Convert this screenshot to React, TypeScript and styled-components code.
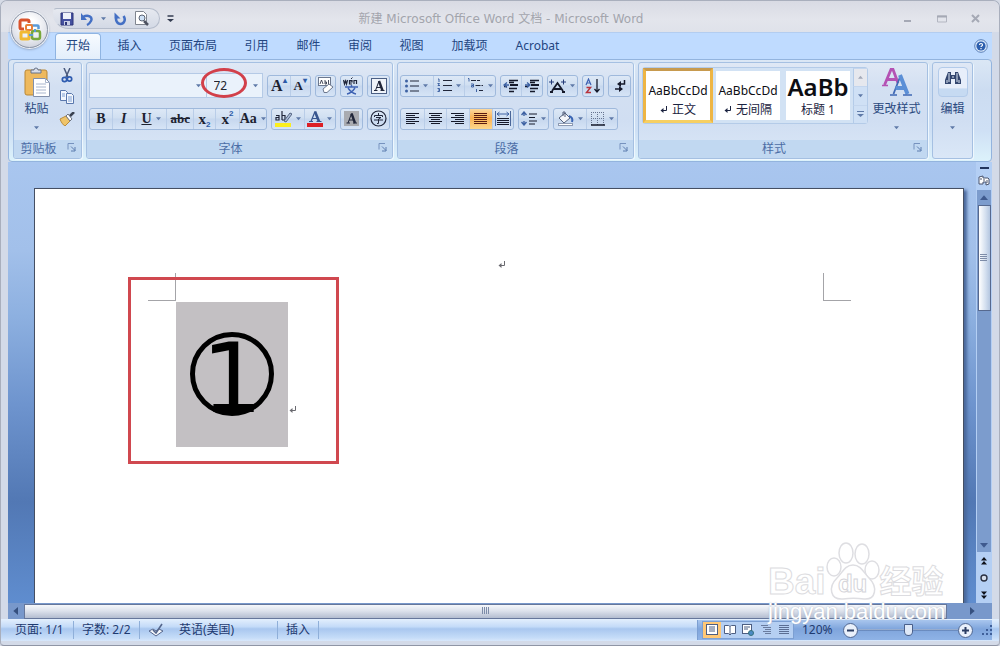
import React from "react";
import styled, { createGlobalStyle, css } from "styled-components";

const ui = '"Noto Sans", "Noto Sans CJK SC", sans-serif';
const navy = "#2b4a80";

const GlobalStyle = createGlobalStyle`
  * { box-sizing: border-box; }
  body { margin: 0; font: 12px/16px ${ui}; color: ${navy}; background: #d6dbe6; }
  button, input { font: inherit; color: inherit; margin: 0; }
  svg { display: block; flex: none; }
`;

/* ---------- window frame ---------- */

const Window = styled.div`
  position: relative;
  display: flex;
  flex-direction: column;
  height: 100vh;
  min-height: 480px;
  overflow: hidden;
  border: 1px solid #a9afbd;
  border-bottom-color: #8f95a5;
  border-radius: 7px 7px 4px 4px;
  background: #d3dae8;
`;

const TitleBar = styled.header`
  display: flex;
  align-items: center;
  height: 31px;
  flex: none;
  padding: 4px 13px 0 52px;
  background: linear-gradient(#d9dbe4, #e3e5ec 60%, #dfe2ea);
`;

const QuickAccess = styled.div`
  display: flex;
  align-items: center;
  width: 107px;
  height: 21px;
  padding-left: 5px;
  border: 1px solid #b4bccb;
  border-left-color: transparent;
  border-radius: 4px 11px 11px 16px;
  background: linear-gradient(#e6e9f0, #d3d9e5);
`;

const IconButton = styled.button<{ $w?: number }>`
  display: flex;
  align-items: center;
  justify-content: center;
  flex: none;
  width: ${p => p.$w ?? 20}px;
  height: 20px;
  padding: 0;
  border: 0;
  background: none;
`;

const Title = styled.h1`
  flex: 1;
  margin: 0;
  text-align: center;
  font: 400 12px/20px "DejaVu Sans", "Noto Sans CJK SC", sans-serif;
  color: #a3a5ad;
  white-space: nowrap;
`;

const WindowControls = styled.div`
  display: flex;
  gap: 14px;
  margin-left: 76px;
`;

const OfficeButton = styled.button`
  position: absolute;
  z-index: 3;
  left: 10px;
  top: 10px;
  width: 37px;
  height: 37px;
  padding: 0;
  display: flex;
  align-items: center;
  justify-content: center;
  border: 1px solid #8d95a5;
  border-radius: 50%;
  background: radial-gradient(circle at 50% 35%, #ffffff 20%, #e3e5ec 60%, #bfc4d0);
  box-shadow: 0 0 0 1px #eef1f6, 0 1px 3px #6d7890;
`;

/* ---------- ribbon ---------- */

const Frame = styled.div`
  display: flex;
  flex-direction: column;
  flex: 1;
  min-height: 0;
  padding: 0 7px;
`;

const TabStrip = styled.nav`
  display: flex;
  align-items: flex-end;
  height: 27px;
  flex: none;
  padding: 0 4px 0 47px;
  background: #bfdbff;
  border-top: 1px solid #b3cdf0;
`;

const Tab = styled.button<{ $active?: boolean; $w: number }>`
  width: ${p => p.$w}px;
  height: 26px;
  padding: 0 0 2px;
  flex: none;
  border: 1px solid transparent;
  border-bottom: 0;
  border-radius: 4px 4px 0 0;
  background: none;
  color: #23457f;
  ${p => p.$active && css`
    border-color: #8fb4e2;
    background: linear-gradient(#f7fbff, #e3eefb);
  `}
`;

const HelpSlot = styled.div`
  margin-left: auto;
  display: flex;
  padding-bottom: 3px;
`;

const Ribbon = styled.section`
  display: flex;
  gap: 4px;
  height: 103px;
  flex: none;
  padding: 2px 4px;
  border: 1px solid #93b4de;
  border-radius: 4px;
  background: linear-gradient(#dbe7f5, #ccdcf1 30%, #cfe0f5 70%, #dcf2fb);
`;

const Group = styled.section<{ $w: number }>`
  display: flex;
  flex-direction: column;
  flex: none;
  width: ${p => p.$w}px;
  border: 1px solid #a5c0e2;
  border-radius: 3px;
  box-shadow: 1px 1px 0 #eef7fe;
  overflow: hidden;
  background: linear-gradient(#dfe8f5, #d3e0f2 25%, #d0def2 60%, #dae7f7);
`;

const GroupBody = styled.div<{ $rows?: boolean }>`
  display: flex;
  flex: 1;
  min-height: 0;
  padding: 0 2px;
  ${p => p.$rows && css`
    flex-direction: column;
    padding-top: 10px;
    gap: 8px;
  `}
`;

const GroupLabel = styled.footer`
  display: flex;
  align-items: center;
  height: 18px;
  padding: 0 2px 0 0;
  background: #c1d8f1;
  color: #4b6da6;
`;

const GroupName = styled.span`
  flex: 1;
  text-align: center;
  white-space: nowrap;
`;

const LauncherButton = styled(IconButton)`
  align-self: flex-start;
  width: 16px;
  height: 14px;
`;

const Row = styled.div`
  display: flex;
  align-items: center;
  gap: 4px;
  height: 25px;
`;

const ButtonSet = styled.div`
  display: flex;
  height: 22px;
  border: 1px solid #9fb9dc;
  border-radius: 3px;
  background: linear-gradient(#dde8f6, #d0dff1 45%, #c6d7ee 50%, #d6e4f6);
  overflow: hidden;
`;

const Tool = styled.button<{ $w: number; $on?: boolean }>`
  display: flex;
  align-items: center;
  justify-content: center;
  gap: 4px;
  width: ${p => p.$w}px;
  height: 20px;
  padding: 0;
  border: 0;
  color: #1f2533;
  background: ${p => (p.$on ? "linear-gradient(#fcd9a0, #fbb254 45%, #fdd78c)" : "none")};
  & + & { border-left: 1px solid #b9cde8; }
`;

const Glyph = styled.span<{ $size?: number; $bold?: boolean; $italic?: boolean; $line?: string }>`
  font-family: "Liberation Serif", "Noto Sans CJK SC", serif;
  font-size: ${p => p.$size ?? 14}px;
  line-height: 16px;
  font-weight: ${p => (p.$bold ? 700 : 400)};
  font-style: ${p => (p.$italic ? "italic" : "normal")};
  text-decoration: ${p => p.$line ?? "none"};
  color: #1d2230;
`;

const Script = styled.span<{ $up?: boolean }>`
  align-self: ${p => (p.$up ? "flex-start" : "flex-end")};
  margin-left: -4px;
  font: 700 8px/9px "Liberation Sans", sans-serif;
  color: #2c5aa8;
`;

const Combos = styled.div`
  display: flex;
  width: 174px;
  height: 25px;
  border: 1px solid #b5cae6;
  background: #eaf2fb;
`;

const ComboInput = styled.input<{ $w: number }>`
  width: ${p => p.$w}px;
  height: 23px;
  padding: 0 0 0 7px;
  border: 0;
  border-left: 1px solid #b5cae6;
  background: none;
  outline: 0;
  color: #22252e;
  &:first-child { border-left: 0; }
`;

const ComboArrow = styled.button`
  width: 14px;
  padding: 0;
  border: 0;
  background: none;
  display: flex;
  align-items: center;
  justify-content: center;
`;

const SizeHighlight = styled.span`
  position: absolute;
  z-index: 4;
  left: 200px;
  top: 67px;
  width: 46px;
  height: 30px;
  border: 3px solid #d2404a;
  border-radius: 50%;
  pointer-events: none;
`;

const TallButton = styled.button<{ $w: number }>`
  display: flex;
  flex-direction: column;
  align-items: center;
  width: ${p => p.$w}px;
  padding: 3px 0 0;
  border: 0;
  background: none;
  color: #2b4a80;
  white-space: nowrap;
`;

const TallIcon = styled.span`
  height: 32px;
  display: flex;
  align-items: center;
`;

const TallLabel = styled.span`
  margin: 3px 0 8px;
`;

const SideTools = styled.div`
  display: flex;
  flex-direction: column;
  gap: 2px;
  padding-top: 2px;
`;

const Gallery = styled.div`
  display: flex;
  height: 57px;
  margin: 4px 0 0 1px;
  border: 1px solid #b4cbe8;
  border-radius: 3px;
  background: #d2e2f4;
`;

const StyleCard = styled.button<{ $active?: boolean }>`
  display: flex;
  flex-direction: column;
  align-items: center;
  justify-content: flex-end;
  width: 70px;
  height: 55px;
  padding: 0 0 2px;
  border: 3px solid ${p => (p.$active ? "#eeb544" : "#d2e2f4")};
  ${p => p.$active && css`
    border-top-color: #c79a4e;
    border-bottom-color: #f6cf62;
  `}
  background: #ffffff;
  color: #1b2340;
  overflow: hidden;
  white-space: nowrap;
`;

const StyleSample = styled.span<{ $big?: boolean }>`
  font: ${p => (p.$big ? "600 24px/30px" : "400 12px/22px")} "Noto Sans", sans-serif;
  color: #0d0d12;
`;

const StyleName = styled.span`
  display: flex;
  align-items: center;
  gap: 4px;
`;

const GalleryArrows = styled.div`
  display: flex;
  flex-direction: column;
  width: 14px;
`;

const GalleryArrow = styled.button<{ $dim?: boolean }>`
  flex: 1;
  padding: 0;
  border: 0;
  border-left: 1px solid #b4cbe8;
  border-top: 1px solid #c4d6ee;
  display: flex;
  align-items: center;
  justify-content: center;
  background: ${p => (p.$dim ? "#e6e8ee" : "#cfe0f5")};
`;

const FindTile = styled.span`
  display: flex;
  align-items: flex-start;
  justify-content: center;
  width: 30px;
  height: 30px;
  padding-top: 3px;
  border: 1px solid #b3cbea;
  border-radius: 4px;
  background: linear-gradient(#e7eefa 72%, #c6daf2 74%);
`;

/* ---------- document area ---------- */

const Workspace = styled.main`
  display: flex;
  flex: 1;
  min-height: 0;
  background: linear-gradient(#a9c6ef, #a2c0ea 20%, #8db0e0 35%, #6e94ce 55%, #5278b4 77%, #5f8dcf 100%);
`;

const Canvas = styled.div`
  flex: 1;
  min-width: 0;
  padding: 26px 12px 0 26px;
  display: flex;
`;

const Paper = styled.article`
  display: flex;
  flex-direction: column;
  flex: 1;
  min-width: 0;
  padding: 66px 140px 0 141px;
  border: 1px solid #454f63;
  border-bottom: 0;
  background: #ffffff;
  box-shadow: 3px 2px 3px #4b699c;
`;

const PageHeader = styled.div`
  height: 47px;
  display: flex;
  justify-content: center;
  padding: 6px 0 0 5px;
`;

const PageBody = styled.div`
  position: relative;
  display: flex;
  align-items: flex-start;
`;

const CropMark = styled.span<{ $right?: boolean }>`
  position: absolute;
  top: -29px;
  width: 28px;
  height: 28px;
  border: 0 solid #a4a4a8;
  border-bottom-width: 1px;
  ${p => (p.$right ? "right: -28px; border-left-width: 1px;" : "left: -28px; border-right-width: 1px;")}
`;

const Selection = styled.span`
  display: flex;
  justify-content: center;
  width: 112px;
  height: 145px;
  padding-top: 30px;
  background: #c3c0c3;
`;

const CircledDigit = styled.span`
  display: flex;
  justify-content: center;
  width: 84px;
  height: 84px;
  border: 5px solid #000000;
  border-radius: 50%;
  font: 400 96px/84px "DejaVu Sans", sans-serif;
  color: #000000;
`;

const ParagraphEnd = styled.span`
  padding: 104px 0 0 1px;
`;

const Annotation = styled.span`
  position: absolute;
  left: -48px;
  top: -25px;
  width: 211px;
  height: 187px;
  border: 3px solid #d0484f;
`;

/* ---------- scroll bars ---------- */

const VerticalBar = styled.div`
  display: flex;
  flex-direction: column;
  align-items: center;
  width: 16px;
  flex: none;
  background: #b4cff4;
`;

const SplitHandle = styled.span`
  width: 9px;
  height: 2px;
  margin: 5px 0 1px;
  background: #22345c;
`;

const Track = styled.div`
  display: flex;
  flex-direction: column;
  align-items: center;
  flex: 1;
  align-self: stretch;
  min-height: 0;
  margin: 0 1px;
  background: #7c9ccd;
`;

const ArrowButton = styled.button<{ $w?: number; $h?: number }>`
  width: ${p => p.$w ?? 14}px;
  height: ${p => p.$h ?? 15}px;
  flex: none;
  padding: 0;
  border: 0;
  background: none;
  display: flex;
  align-items: center;
  justify-content: center;
`;

const VerticalThumb = styled.div`
  width: 13px;
  flex: 0 1 106px;
  display: flex;
  align-items: center;
  justify-content: center;
  border: 1px solid #56698f;
  background: linear-gradient(90deg, #ffffff, #d3dfef 60%, #b4c6e0);
`;

const Filler = styled.span`
  flex: 1;
`;

const HorizontalBar = styled.div`
  display: flex;
  align-items: center;
  height: 16px;
  flex: none;
  padding-right: 16px;
  background: #7898cb;
`;

const HorizontalThumb = styled.div`
  flex: 1;
  height: 15px;
  display: flex;
  align-items: center;
  justify-content: center;
  border: 1px solid #66779b;
  background: linear-gradient(#f6f8fb, #dde2ec 45%, #b3bdd0);
`;

/* ---------- status bar ---------- */

const StatusBar = styled.footer`
  display: flex;
  align-items: center;
  height: 22px;
  flex: none;
  margin: 0 0 4px;
  padding: 0 7px 0 0;
  background: linear-gradient(#e3effd, #c4dbf8 35%, #a9c7ef 45%, #c5dcf8 85%, #d7e7fb);
`;

const StatusItem = styled.button<{ $w: number; $line?: boolean; $pad?: number }>`
  display: flex;
  align-items: center;
  width: ${p => p.$w}px;
  height: 18px;
  padding: 0 0 0 ${p => p.$pad ?? 8}px;
  border: 0;
  border-right: ${p => (p.$line ? "1px solid #8fafd9" : "0")};
  background: none;
  color: #1e3a70;
  white-space: nowrap;
`;

const ZoomArea = styled.div`
  display: flex;
  align-items: center;
  height: 20px;
  padding-left: 4px;
  border-left: 1px solid #7c9fd2;
  background: linear-gradient(#a9c6ee, #7fa5dc 45%, #8fb3e6);
`;

const ViewButtons = styled.div`
  display: flex;
  height: 18px;
  border: 1px solid #7c9fd2;
  background: #b5cff2;
`;

const ViewButton = styled.button<{ $on?: boolean }>`
  display: flex;
  align-items: center;
  justify-content: center;
  width: 18px;
  padding: 0;
  border: 0;
  background: ${p => (p.$on ? "#ffc876" : "none")};
`;

const RoundButton = styled.button`
  width: 15px;
  height: 15px;
  padding: 0;
  display: flex;
  align-items: center;
  justify-content: center;
  border: 1px solid #4f6690;
  border-radius: 50%;
  background: #e9f0fb;
`;

const ZoomSlider = styled.input`
  appearance: none;
  width: 100px;
  height: 16px;
  background: linear-gradient(transparent 7px, #dbe9fc 7px, #54709f 8px, transparent 9px);
  &::-webkit-slider-thumb {
    appearance: none;
    width: 9px;
    height: 12px;
    border: 1px solid #4a608b;
    border-radius: 1px 1px 5px 5px;
    background: #dfe9f8;
  }
`;

/* ---------- watermark ---------- */

const Watermark = styled.div`
  position: absolute;
  z-index: 5;
  right: 51px;
  bottom: 22px;
  width: 180px;
  pointer-events: none;
  white-space: nowrap;
`;

const Brand = styled.div`
  display: flex;
  align-items: flex-end;
`;

const BrandText = styled.span<{ $size: number }>`
  font: 700 ${p => p.$size}px/38px "Liberation Sans", "Noto Sans CJK SC", sans-serif;
  color: #ffffff;
  -webkit-text-stroke: 1px #dcdce0;
`;

const Paw = styled.span`
  position: relative;
  display: flex;
  justify-content: center;
`;

const PawText = styled.span`
  position: absolute;
  bottom: 5px;
  font: 700 24px/24px "Liberation Sans", sans-serif;
  color: #ffffff;
  -webkit-text-stroke: 1px #d5d5da;
`;

const SiteName = styled.div`
  font: 400 22px/22px "Liberation Sans", sans-serif;
  color: #ffffff;
  text-shadow: 0 0 2px #a9b2c2;
`;

/* ---------- drawings ---------- */

const Caret = ({ dir = "down", color = "#5f7aa8", s = 5 }: { dir?: "down" | "up" | "left" | "right"; color?: string; s?: number }) => {
  const turn = { down: 0, up: 180, left: 90, right: 270 }[dir];
  return (
    <svg width={s} height={s} viewBox="0 0 6 6" aria-hidden>
      <path d="M0 1.500h6L3 5z" fill={color} transform={`rotate(${turn} 3 3)`} />
    </svg>
  );
};

const Svg = ({ w = 16, h = 16, children }: { w?: number; h?: number; children: React.ReactNode }) => (
  <svg width={w} height={h} viewBox={`0 0 ${w} ${h}`} fill="none" aria-hidden>{children}</svg>
);

const Launcher = () => (
  <LauncherButton aria-label="对话框启动器">
    <Svg w={9} h={9}><path d="M1 6.500V0.500h6" stroke="#7692be" /><path d="M4 3.500l4 4M8 4v4H4" stroke="#5d7cae" /></Svg>
  </LauncherButton>
);

const Return = ({ color = "#6a6a70" }: { color?: string }) => (
  <Svg w={8} h={8}><path d="M6.500 0v4.500H2" stroke={color} /><path d="M3.500 2v5L0.500 4.500z" fill={color} /></Svg>
);

const Office = () => (
  <Svg w={26} h={26}>
    <path d="M12 6V4.500a1.500 1.500 0 0 0-1.500-1.500h-6A1.500 1.500 0 0 0 3 4.500v6A1.500 1.500 0 0 0 4.500 12H7" stroke="#d9532c" strokeWidth="3" />
    <path d="M14 8.500h6.500a1 1 0 0 1 1 1V12" stroke="#5b9bd8" strokeWidth="2.500" />
    <rect x="9" y="8" width="6" height="5" rx="1" stroke="#e8813a" strokeWidth="2" />
    <rect x="4" y="15" width="8" height="7" rx="1" stroke="#f1b932" strokeWidth="3" />
    <rect x="15" y="14" width="8" height="8" rx="2" stroke="#79a83c" strokeWidth="2.500" />
    <path d="M12 18h4M18 12v3" stroke="#5b9bd8" strokeWidth="2" />
  </Svg>
);

const Lines = ({ rows, w = 14, color = "#15192a" }: { rows: [number, number][]; w?: number; color?: string }) => (
  <Svg w={w} h={14}>{rows.map(([a, b], i) => <path key={i} d={`M${a} ${1.5 + i * 2}H${b}`} stroke={color} />)}</Svg>
);

const Bullets = () => (
  <Svg w={14} h={14}>{[2, 7, 12].map(y => <g key={y}><circle cx="1.500" cy={y} r="1.500" fill="#3e62a3" /><path d={`M5 ${y}h9`} stroke="#20263a" strokeWidth="1.200" /></g>)}</Svg>
);

const Numbers = () => (
  <Svg w={15} h={15}>
    <path d="M1 1h1v3M0.500 5.500h2l-1.500 2h2M0.500 10.500h2v3h-2M1 12h1.500" stroke="#3e62a3" />
    <path d="M6 2.500h9M6 7.500h9M6 12.500h9" stroke="#20263a" strokeWidth="1.200" />
  </Svg>
);

const Multi = () => (
  <Svg w={17} h={15}>
    <path d="M1 0.500h1v3M4 6h2.500v3H4.500V7.500h2M9.500 11v3" stroke="#3e62a3" />
    <path d="M4 2.500h9M8.500 7.500h7.500M12 12.500h4" stroke="#20263a" strokeDasharray="5 1" />
  </Svg>
);

const Indent = ({ flip }: { flip?: boolean }) => (
  <Svg w={16} h={14}>
    <path d="M6 1.500h9M6 3.500h5M1 7.500h3M6 9.500h8M6 12.500h5" stroke="#15192a" strokeWidth="1.500" />
    <path d="M7 6h8" stroke="#15192a" strokeWidth="2" />
    <path d={flip ? "M1 6h4M3 3.500l3 2.500-3 2.500" : "M6 6H2M4 3.500L1 6l3 2.500"} stroke="#3e62a3" strokeWidth="1.300" />
  </Svg>
);

const Spacing = () => (
  <Svg w={16} h={15}>
    <path d="M3 1v4M3 10v4M0.500 4L3 1l2.500 3M0.500 11L3 14l2.500-3" stroke="#3e62a3" strokeWidth="1.400" />
    <path d="M8 3h8M8 6.500h6M8 10h8M8 13h6" stroke="#15192a" />
  </Svg>
);

const Distribute = () => (
  <Svg w={16} h={16}>
    <path d="M0.500 0v15M15.500 0v15" stroke="#4a6699" />
    <path d="M2 3h12M4.500 1L2 3l2.500 2M11.500 1L14 3l-2.500 2" stroke="#3e62a3" />
    <path d="M2 7.500h12M2 9.500h12M2 11.500h12M2 13.500h12" stroke="#15192a" />
  </Svg>
);

const Asian = () => (
  <Svg w={17} h={14}>
    <path d="M1 13h3M3 12L8.500 4l5.500 8M13 13h3M5 10h7" stroke="#15192a" strokeWidth="1.800" />
    <path d="M0 3h5M2.500 0.500v5M12 3h5M14.500 0.500v5" stroke="#243a78" />
  </Svg>
);

const Bucket = () => (
  <Svg w={17} h={16}>
    <path d="M8 2l5 5-6 5-5-5z" fill="#f4f6fa" stroke="#54617c" />
    <path d="M6 5V1h2v5" stroke="#54617c" />
    <path d="M12 5c3 1 4 3 3 6" stroke="#3b66b4" strokeWidth="2" />
    <rect x="1.500" y="12.500" width="14" height="2" fill="#fff" stroke="#8e9bb3" />
  </Svg>
);

const Borders = () => (
  <Svg w={14} h={14}>
    <path d="M0.500 0v13M6.500 0v13M12.500 0v13M0 0.500h13M0 6.500h13" stroke="#66748f" strokeDasharray="1 1" />
    <path d="M0 13h14" stroke="#15192a" strokeWidth="1.500" />
  </Svg>
);

const Paste = () => (
  <Svg w={26} h={31}>
    <rect x="1" y="3" width="22" height="25" rx="2" fill="#eeb95d" stroke="#b98734" />
    <path d="M7 6V3h3a2 2 0 0 1 4 0h3v3z" fill="#d8dde8" stroke="#67728a" />
    <path d="M9.500 11.500h12l4 4v14h-16z" fill="#fff" stroke="#8290ab" />
    <path d="M21.500 11.500v4h4M12 17h10M12 20h10M12 23h10M12 26h10" stroke="#a9b6cd" />
  </Svg>
);

const Cut = () => (
  <Svg w={12} h={15}>
    <path d="M3 0l4 9M9 0L5 9" stroke="#4a5a7d" strokeWidth="1.500" />
    <circle cx="3.500" cy="11.500" r="2.200" stroke="#2f5cb0" strokeWidth="1.700" />
    <circle cx="8.500" cy="11" r="2.200" stroke="#2f5cb0" strokeWidth="1.700" />
  </Svg>
);

const Copy = () => (
  <Svg w={16} h={14}>
    <path d="M1.500 0.500h5l2 2v8h-7z" fill="#f3f7fd" stroke="#5a78ad" />
    <path d="M7.500 3.500h5l2 2v8h-7z" fill="#f3f7fd" stroke="#5a78ad" />
    <path d="M3 4h3M3 6h3M9 7h4M9 9h4M9 11h4" stroke="#7f9fd2" />
  </Svg>
);

const Brush = () => (
  <Svg w={16} h={14}>
    <path d="M1 7l6-3 4 5-5 5c-2-1-4-4-5-7z" fill="#efc469" stroke="#b88b3c" />
    <path d="M7 4l2-2 4 5-2 2z" fill="#fff" stroke="#6f7582" />
    <path d="M11 4l4-4" stroke="#39404f" strokeWidth="2.500" />
  </Svg>
);

const Save = () => (
  <Svg w={14} h={14}>
    <path d="M1 1h12v12H1z" fill="#44509f" stroke="#2c3578" />
    <rect x="3" y="1" width="8" height="6" fill="#eef1fa" />
    <rect x="4" y="9" width="6" height="4" fill="#c8cee6" />
    <rect x="5" y="10" width="2" height="3" fill="#2c3578" />
  </Svg>
);

const Undo = () => (
  <Svg w={14} h={14}>
    <path d="M3 5c5-3 10 0 8 4-1 2-2 3-4 4" stroke="#4470c4" strokeWidth="2.400" />
    <path d="M1 1v7h6z" fill="#4470c4" />
  </Svg>
);

const Redo = () => (
  <Svg w={13} h={14}>
    <path d="M9.500 4c3 4 0 8-3 8S0.500 8 3 4" stroke="#4470c4" strokeWidth="2.600" />
    <path d="M6.500 0.500v6H0.500z" fill="#4470c4" transform="rotate(90 3.500 3.500)" />
  </Svg>
);

const Preview = () => (
  <Svg w={16} h={15}>
    <path d="M1.500 0.500h8l3 3v10h-11z" fill="#fff" stroke="#7f858f" />
    <circle cx="8" cy="7" r="3" fill="#cfe2f7" stroke="#5c6474" />
    <path d="M10 10l4 4" stroke="#4d5260" strokeWidth="2.500" />
  </Svg>
);

const ChangeStyles = () => (
  <Svg w={30} h={30}>
    <path d="M2.500 18L9 2.500h2L16 16M5 12.500h9" stroke="#b452b4" strokeWidth="2.800" />
    <path d="M0 18.500h6" stroke="#b452b4" strokeWidth="1.500" />
    <path d="M11.500 27l6.500-17" stroke="#3f68b4" strokeWidth="1.800" />
    <path d="M18 8l7.500 19M13.500 21h10" stroke="#5b8fd6" strokeWidth="4" />
    <path d="M8 28h7M21 28h9" stroke="#3f68b4" strokeWidth="1.500" />
  </Svg>
);

const Binoculars = () => (
  <Svg w={16} h={14}>
    <path d="M3 1h3v3h4V1h3l3 8v4h-6V8H6v5H0V9z" fill="#33466f" />
    <path d="M4 2v9M12 2v9M8 5v2M2 9v3M14 9v3" stroke="#dfe8f6" />
  </Svg>
);

const Grip = ({ vertical }: { vertical?: boolean }) => (
  <Svg w={8} h={8}><path d={vertical ? "M0.500 0v7M2.500 0v7M4.500 0v7M6.500 0v7" : "M0 0.500h7M0 2.500h7M0 4.500h7M0 6.500h7"} stroke="#7d8ca8" /></Svg>
);

const tabs: [string, number][] = [["开始", 46], ["插入", 57], ["页面布局", 70], ["引用", 57], ["邮件", 47], ["审阅", 56], ["视图", 47], ["加载项", 69], ["Acrobat", 67]];
const left: [number, number][] = [[0, 13], [0, 9], [0, 13], [0, 9], [0, 13], [0, 9]];
const mid: [number, number][] = [[0, 13], [2, 11], [0, 13], [2, 11], [0, 13], [2, 11]];
const right: [number, number][] = [[0, 13], [4, 13], [0, 13], [4, 13], [0, 13], [4, 13]];
const full: [number, number][] = [[0, 13], [0, 13], [0, 13], [0, 13], [0, 13], [0, 13]];

export default function App() {
  return (
    <>
      <GlobalStyle />
      <Window>
        <TitleBar>
          <QuickAccess>
            <IconButton $w={16} aria-label="保存"><Save /></IconButton>
            <IconButton $w={24} aria-label="撤消"><Undo /></IconButton>
            <IconButton $w={8} aria-label="撤消列表"><Caret /></IconButton>
            <IconButton $w={26} aria-label="恢复"><Redo /></IconButton>
            <IconButton $w={18} aria-label="打印预览"><Preview /></IconButton>
          </QuickAccess>
          <IconButton aria-label="自定义快速访问工具栏">
            <Svg w={7} h={8}><path d="M0.500 1h6" stroke="#333c50" strokeWidth="1.500" /><path d="M0 4h7L3.500 7z" fill="#333c50" /></Svg>
          </IconButton>
          <Title>新建 Microsoft Office Word 文档 - Microsoft Word</Title>
          <WindowControls>
            <IconButton aria-label="最小化"><Svg w={10} h={10}><path d="M1 7h7" stroke="#a5a9b5" strokeWidth="2" /></Svg></IconButton>
            <IconButton aria-label="最大化"><Svg w={10} h={10}><path d="M0.500 2v6h9V2z" stroke="#b3b6c1" /><path d="M0 2.500h10" stroke="#a5a9b5" strokeWidth="2" /></Svg></IconButton>
            <IconButton aria-label="关闭"><Svg w={10} h={10}><path d="M1 1l7 7M8 1L1 8" stroke="#a5a9b5" strokeWidth="2" /></Svg></IconButton>
          </WindowControls>
        </TitleBar>
        <OfficeButton aria-label="Office 按钮"><Office /></OfficeButton>

        <Frame>
          <TabStrip>
            {tabs.map(([name, w], i) => <Tab key={name} $w={w} $active={i === 0}>{name}</Tab>)}
            <HelpSlot>
              <IconButton $w={14} aria-label="帮助">
                <Svg w={14} h={14}>
                  <circle cx="7" cy="7" r="6.300" fill="#dbe9fb" stroke="#5a7fb8" />
                  <circle cx="7" cy="7" r="4.600" fill="#2d5fae" />
                  <path d="M5.500 6c0-2 3-2 3 0 0 1-1.500 1-1.500 2M7 9v1.200" stroke="#fff" strokeWidth="1.200" />
                </Svg>
              </IconButton>
            </HelpSlot>
          </TabStrip>

          <Ribbon>
            <Group $w={69}>
              <GroupBody>
                <TallButton $w={41}>
                  <TallIcon><Paste /></TallIcon>
                  <TallLabel>粘贴</TallLabel>
                  <Caret />
                </TallButton>
                <SideTools>
                  <IconButton aria-label="剪切"><Cut /></IconButton>
                  <IconButton aria-label="复制"><Copy /></IconButton>
                  <IconButton aria-label="格式刷"><Brush /></IconButton>
                </SideTools>
              </GroupBody>
              <GroupLabel><GroupName>剪贴板</GroupName><Launcher /></GroupLabel>
            </Group>

            <Group $w={307}>
              <GroupBody $rows>
                <Row>
                  <Combos>
                    <ComboInput $w={102} aria-label="字体" />
                    <ComboArrow aria-label="字体列表"><Caret /></ComboArrow>
                    <ComboInput $w={43} aria-label="字号" defaultValue="72" />
                    <ComboArrow aria-label="字号列表"><Caret /></ComboArrow>
                  </Combos>
                  <ButtonSet>
                    <Tool $w={22} aria-label="增大字体"><Glyph $bold $size={16}>A</Glyph><Script $up>▴</Script></Tool>
                    <Tool $w={20} aria-label="缩小字体"><Glyph $bold $size={13}>A</Glyph><Script $up>▾</Script></Tool>
                  </ButtonSet>
                  <ButtonSet>
                    <Tool $w={20} aria-label="清除格式">
                      <Svg w={17} h={17}>
                        <rect x="1.500" y="0.500" width="12" height="8" fill="#fff" stroke="#6c788e" />
                        <path d="M3 7l1.500-4L6 7M8 3v4h1.500V5H8M11.500 3v4" stroke="#20263a" strokeWidth="0.800" />
                        <path d="M6 12l6-5 4 3-6 5.500H7z" fill="#fff" stroke="#6c788e" />
                      </Svg>
                    </Tool>
                  </ButtonSet>
                  <ButtonSet>
                    <Tool $w={21} aria-label="拼音指南">
                      <Svg w={17} h={18}>
                        <path d="M0.500 3l1 4 1-3 1 3 1-4M6 5h3V3.500H6.500V7H9M11 7V3.500h2.500V7" stroke="#20263a" strokeWidth="1.200" />
                        <path d="M8 2l1.500-1.500" stroke="#20263a" />
                        <path d="M2 10h13M8.500 8v2M5 11c2 3 4 5 8 6M12 11c-2 3-4 5-8 6" stroke="#3e62b3" strokeWidth="1.400" />
                      </Svg>
                    </Tool>
                  </ButtonSet>
                  <ButtonSet>
                    <Tool $w={21} aria-label="字符边框">
                      <Svg w={16} h={16}>
                        <rect x="0.500" y="0.500" width="15" height="15" fill="#f0f4fa" stroke="#4b5f84" />
                        <path d="M8 3l3.500 9.500" stroke="#20263a" strokeWidth="2.400" />
                        <path d="M4.500 12.500L8 3M5.500 9.500h5M3 12.500h3.500M9.500 12.500h4" stroke="#20263a" />
                      </Svg>
                    </Tool>
                  </ButtonSet>
                </Row>
                <Row>
                  <ButtonSet>
                    <Tool $w={22} aria-label="加粗"><Glyph $bold>B</Glyph></Tool>
                    <Tool $w={23} aria-label="倾斜"><Glyph $bold $italic>I</Glyph></Tool>
                    <Tool $w={32} aria-label="下划线"><Glyph $bold $line="underline">U</Glyph><Caret /></Tool>
                    <Tool $w={27} aria-label="删除线"><Glyph $bold $size={13} $line="line-through">abc</Glyph></Tool>
                    <Tool $w={22} aria-label="下标"><Glyph $bold $size={15}>x</Glyph><Script>2</Script></Tool>
                    <Tool $w={24} aria-label="上标"><Glyph $bold $size={15}>x</Glyph><Script $up>2</Script></Tool>
                    <Tool $w={27} aria-label="更改大小写"><Glyph $bold>Aa</Glyph><Caret /></Tool>
                  </ButtonSet>
                  <ButtonSet>
                    <Tool $w={32} aria-label="突出显示">
                      <Svg w={17} h={18}>
                        <path d="M1 5.500h3v4.500H1V7.500h3M7 1v9M7 5.500h3V10H7" stroke="#20263a" strokeWidth="1.200" />
                        <path d="M9 11l6-8 2 1-6 8z" fill="#aebfda" stroke="#52627f" />
                        <rect y="13" width="16" height="4" fill="#fbee1e" />
                      </Svg>
                      <Caret />
                    </Tool>
                    <Tool $w={32} aria-label="字体颜色">
                      <Svg w={16} h={18}>
                        <path d="M8 1.500l4 10" stroke="#37558f" strokeWidth="2.600" />
                        <path d="M4 11.500L8 1.500M5 8.500h6M2 11.500h4M9.500 11.500h5" stroke="#37558f" strokeWidth="1.200" />
                        <rect y="13" width="16" height="4" fill="#dc1f26" />
                      </Svg>
                      <Caret />
                    </Tool>
                  </ButtonSet>
                  <ButtonSet>
                    <Tool $w={21} aria-label="字符底纹">
                      <Svg w={15} h={15}>
                        <rect width="15" height="15" fill="#a9abb0" />
                        <path d="M7.500 2.500L11 12" stroke="#20263a" strokeWidth="2.400" />
                        <path d="M4 12l3.500-9.500M5 9h5M2.500 12H6M9 12h4" stroke="#20263a" />
                      </Svg>
                    </Tool>
                  </ButtonSet>
                  <ButtonSet>
                    <Tool $w={21} aria-label="带圈字符">
                      <Svg w={17} h={17}>
                        <circle cx="8.500" cy="8.500" r="7.500" stroke="#20263a" strokeWidth="1.200" />
                        <path d="M8.500 3v2M4.500 7V5.500h8V7M6 7.500h5L8.500 9v4.500H7M4 10h9" stroke="#20263a" />
                      </Svg>
                    </Tool>
                  </ButtonSet>
                </Row>
              </GroupBody>
              <GroupLabel><GroupName>字体</GroupName><Launcher /></GroupLabel>
            </Group>

            <Group $w={237}>
              <GroupBody $rows>
                <Row>
                  <ButtonSet>
                    <Tool $w={32} aria-label="项目符号"><Bullets /><Caret /></Tool>
                    <Tool $w={32} aria-label="编号"><Numbers /><Caret /></Tool>
                    <Tool $w={31} aria-label="多级列表"><Multi /><Caret /></Tool>
                  </ButtonSet>
                  <ButtonSet>
                    <Tool $w={21} aria-label="减少缩进量"><Indent /></Tool>
                    <Tool $w={21} aria-label="增加缩进量"><Indent flip /></Tool>
                  </ButtonSet>
                  <ButtonSet><Tool $w={29} aria-label="中文版式"><Asian /><Caret /></Tool></ButtonSet>
                  <ButtonSet>
                    <Tool $w={21} aria-label="排序">
                      <Svg w={16} h={16}>
                        <path d="M1 7l2.500-6L6 7M2 5h3" stroke="#3e62b3" strokeWidth="1.200" />
                        <path d="M1.500 9.500h4l-4 5h4.500" stroke="#b8323c" strokeWidth="1.500" />
                        <path d="M12 1v13M9.500 11l2.500 3 2.500-3" stroke="#15192a" strokeWidth="1.300" />
                      </Svg>
                    </Tool>
                  </ButtonSet>
                  <ButtonSet>
                    <Tool $w={21} aria-label="显示编辑标记">
                      <Svg w={14} h={14}>
                        <path d="M11.500 1v4H6M2 10h6" stroke="#15192a" strokeWidth="1.500" />
                        <path d="M8 2v6L4 5zM6 7v6l4-3z" fill="#15192a" />
                      </Svg>
                    </Tool>
                  </ButtonSet>
                </Row>
                <Row>
                  <ButtonSet>
                    <Tool $w={23} aria-label="左对齐"><Lines rows={left} /></Tool>
                    <Tool $w={22} aria-label="居中"><Lines rows={mid} /></Tool>
                    <Tool $w={23} aria-label="右对齐"><Lines rows={right} /></Tool>
                    <Tool $w={23} $on aria-label="两端对齐"><Lines rows={full} color="#5a1a10" /></Tool>
                    <Tool $w={21} aria-label="分散对齐"><Distribute /></Tool>
                  </ButtonSet>
                  <ButtonSet><Tool $w={29} aria-label="行距"><Spacing /><Caret /></Tool></ButtonSet>
                  <ButtonSet>
                    <Tool $w={32} aria-label="底纹"><Bucket /><Caret /></Tool>
                    <Tool $w={31} aria-label="边框"><Borders /><Caret /></Tool>
                  </ButtonSet>
                </Row>
              </GroupBody>
              <GroupLabel><GroupName>段落</GroupName><Launcher /></GroupLabel>
            </Group>

            <Group $w={290}>
              <GroupBody>
                <Gallery>
                  <StyleCard $active><StyleSample>AaBbCcDd</StyleSample><StyleName><Return color="#1b2340" />正文</StyleName></StyleCard>
                  <StyleCard><StyleSample>AaBbCcDd</StyleSample><StyleName><Return color="#1b2340" />无间隔</StyleName></StyleCard>
                  <StyleCard><StyleSample $big>AaBb</StyleSample><StyleName>标题 1</StyleName></StyleCard>
                  <GalleryArrows>
                    <GalleryArrow $dim aria-label="上一行"><Caret dir="up" color="#a3a9b8" /></GalleryArrow>
                    <GalleryArrow aria-label="下一行"><Caret /></GalleryArrow>
                    <GalleryArrow aria-label="其他"><Svg w={7} h={8}><path d="M0 1.500h7" stroke="#5f7aa8" /><path d="M0 4h7L3.500 7z" fill="#5f7aa8" /></Svg></GalleryArrow>
                  </GalleryArrows>
                </Gallery>
                <TallButton $w={60}>
                  <TallIcon><ChangeStyles /></TallIcon>
                  <TallLabel>更改样式</TallLabel>
                  <Caret />
                </TallButton>
              </GroupBody>
              <GroupLabel><GroupName>样式</GroupName><Launcher /></GroupLabel>
            </Group>

            <Group $w={41}>
              <TallButton $w={39}>
                <TallIcon><FindTile><Binoculars /></FindTile></TallIcon>
                <TallLabel>编辑</TallLabel>
                <Caret />
              </TallButton>
            </Group>
          </Ribbon>

          <Workspace>
            <Canvas>
              <Paper>
                <PageHeader><Return /></PageHeader>
                <PageBody>
                  <CropMark />
                  <CropMark $right />
                  <Selection><CircledDigit>1</CircledDigit></Selection>
                  <ParagraphEnd><Return /></ParagraphEnd>
                  <Annotation />
                </PageBody>
              </Paper>
            </Canvas>
            <VerticalBar>
              <SplitHandle />
              <IconButton $w={14} aria-label="标尺">
                <Svg w={12} h={12}><path d="M1 3l4-1v2h5l1 1v5l-3 1V8H5v2H1z" fill="#fff" stroke="#4a556e" /><path d="M3 4v2M6 5v2M9 6v3" stroke="#4a556e" /></Svg>
              </IconButton>
              <Track>
                <ArrowButton aria-label="向上滚动"><Caret dir="up" s={8} color="#3f5a8e" /></ArrowButton>
                <VerticalThumb><Grip /></VerticalThumb>
                <Filler />
                <ArrowButton aria-label="向下滚动"><Caret s={8} color="#3f5a8e" /></ArrowButton>
              </Track>
              <ArrowButton $h={17} aria-label="上一页"><Svg w={6} h={8}><path d="M0 3.500L3 0l3 3.500zM0 7.500L3 4l3 3.500z" fill="#10131c" /></Svg></ArrowButton>
              <ArrowButton $h={17} aria-label="选择浏览对象"><Svg w={8} h={8}><circle cx="4" cy="4" r="3" fill="#d5deec" stroke="#2b3142" strokeWidth="1.400" /></Svg></ArrowButton>
              <ArrowButton $h={17} aria-label="下一页"><Svg w={6} h={8}><path d="M0 0.500L3 4l3-3.500zM0 4.500L3 8l3-3.500z" fill="#10131c" /></Svg></ArrowButton>
            </VerticalBar>
          </Workspace>
          <HorizontalBar>
            <ArrowButton $w={16} aria-label="向左滚动"><Caret dir="left" s={8} color="#35507f" /></ArrowButton>
            <HorizontalThumb><Grip vertical /></HorizontalThumb>
            <ArrowButton $w={29} aria-label="向右滚动"><Filler /><Caret dir="right" s={8} color="#35507f" /></ArrowButton>
          </HorizontalBar>
        </Frame>

        <StatusBar>
          <StatusItem $w={73} $line $pad={14}>页面: 1/1</StatusItem>
          <StatusItem $w={66} $line>字数: 2/2</StatusItem>
          <StatusItem $w={31} aria-label="校对">
            <Svg w={16} h={14}>
              <path d="M1 8l4-2 3 2 3-2 4 2-7 5z" fill="#f4f7fc" stroke="#54668c" />
              <path d="M5 7l3 3 6-9" stroke="#54668c" strokeWidth="1.600" />
            </Svg>
          </StatusItem>
          <StatusItem $w={107} $line>英语(美国)</StatusItem>
          <StatusItem $w={41} $line>插入</StatusItem>
          <Filler />
          <ZoomArea>
            <ViewButtons>
              <ViewButton $on aria-label="页面视图"><Svg w={12} h={12}><rect x="0.500" y="0.500" width="11" height="10" fill="#fff" stroke="#4d5e82" /><path d="M3 3h6M3 5h6M3 7h6" stroke="#4d5e82" /></Svg></ViewButton>
              <ViewButton aria-label="阅读版式视图"><Svg w={12} h={12}><path d="M0.500 1.500h4l1.500 1 1.500-1h4v8h-4L6 11l-1.500-1.500h-4zM6 3v8" fill="#fff" stroke="#4d5e82" /></Svg></ViewButton>
              <ViewButton aria-label="Web 版式视图"><Svg w={12} h={12}><rect x="0.500" y="0.500" width="9" height="9" fill="#fff" stroke="#4d5e82" /><path d="M2 3h6M2 5h4" stroke="#4d5e82" /><circle cx="9" cy="9" r="2.500" fill="#4b8bc4" stroke="#35707c" /></Svg></ViewButton>
              <ViewButton aria-label="大纲视图"><Svg w={12} h={12}><path d="M1 1.500h7M3 3.500h8M5 5.500h6M3 7.500h8M5 9.500h6" stroke="#6a7c9e" /></Svg></ViewButton>
              <ViewButton aria-label="普通视图"><Svg w={12} h={12}><path d="M1 1.500h10M1 3.500h10M1 5.500h10M1 7.500h10M1 9.500h10" stroke="#5b6e93" /></Svg></ViewButton>
            </ViewButtons>
            <StatusItem $w={49}>120%</StatusItem>
            <RoundButton aria-label="缩小"><Svg w={9} h={9}><path d="M1 4.500h7" stroke="#2b3d63" strokeWidth="2" /></Svg></RoundButton>
            <ZoomSlider type="range" min={0} max={100} defaultValue={51} aria-label="显示比例" />
            <RoundButton aria-label="放大"><Svg w={9} h={9}><path d="M1 4.500h7M4.500 1v7" stroke="#2b3d63" strokeWidth="2" /></Svg></RoundButton>
            <StatusItem as="span" $w={19}>
              <Svg w={11} h={11}><path d="M9 0h2v2H9zM9 4h2v2H9zM5 4h2v2H5zM9 8h2v2H9zM5 8h2v2H5zM1 8h2v2H1z" fill="#3f5f99" /></Svg>
            </StatusItem>
          </ZoomArea>
        </StatusBar>

        <SizeHighlight />
        <Watermark>
          <Brand>
            <BrandText $size={37}>Bai</BrandText>
            <Paw>
              <Svg w={54} h={60}>
                <g fill="#ffffff" stroke="#dedee2" strokeWidth="1.500">
                  <ellipse cx="8" cy="26" rx="7" ry="9" />
                  <ellipse cx="20" cy="12" rx="7" ry="10" />
                  <ellipse cx="36" cy="13" rx="7" ry="10" />
                  <ellipse cx="46" cy="29" rx="7" ry="9" />
                  <path d="M27 24c8 0 11 8 16 13 9 9 7 22-5 21-7-1-14-1-21 0-13 1-15-12-6-21 5-5 8-13 16-13z" />
                </g>
              </Svg>
              <PawText>du</PawText>
            </Paw>
            <BrandText $size={32}>经验</BrandText>
          </Brand>
          <SiteName>jingyan.baidu.com</SiteName>
        </Watermark>
      </Window>
    </>
  );
}
